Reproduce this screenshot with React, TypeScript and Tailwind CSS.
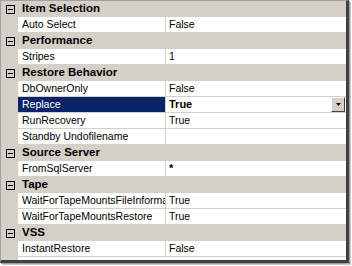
import React from "react";

type Row =
  | { kind: "cat"; label: string }
  | { kind: "prop"; name: string; value: string; selected?: boolean };

const rows: Row[] = [
  { kind: "cat", label: "Item Selection" },
  { kind: "prop", name: "Auto Select", value: "False" },
  { kind: "cat", label: "Performance" },
  { kind: "prop", name: "Stripes", value: "1" },
  { kind: "cat", label: "Restore Behavior" },
  { kind: "prop", name: "DbOwnerOnly", value: "False" },
  { kind: "prop", name: "Replace", value: "True", selected: true },
  { kind: "prop", name: "RunRecovery", value: "True" },
  { kind: "prop", name: "Standby Undofilename", value: "" },
  { kind: "cat", label: "Source Server" },
  { kind: "prop", name: "FromSqlServer", value: "*" },
  { kind: "cat", label: "Tape" },
  { kind: "prop", name: "WaitForTapeMountsFileInformation", value: "True" },
  { kind: "prop", name: "WaitForTapeMountsRestore", value: "True" },
  { kind: "cat", label: "VSS" },
  { kind: "prop", name: "InstantRestore", value: "False" },
];

function MinusBox() {
  return (
    <div className="relative w-[9px] h-[9px] border border-black bg-[#d4d0c8]">
      <div className="absolute left-[1px] top-[3px] w-[5px] h-[1px] bg-black" />
    </div>
  );
}

function DropButton() {
  return (
    <div className="absolute right-[1px] top-0 w-[14px] h-[15px] bg-[#d4d0c8] border-t border-l border-white border-r border-b border-r-[#404040] border-b-[#404040] flex items-center justify-center">
      <svg width="5" height="3" viewBox="0 0 5 3">
        <path d="M0 0h5L2.5 3z" fill="#000" />
      </svg>
    </div>
  );
}

export default function App() {
  return (
    <div className="w-[352px] h-[266px] bg-white font-['Liberation_Sans',Arial,sans-serif] text-[10.5px] text-black">
      <div className="w-[349px] h-[263px] border-t border-l border-[#a0a0a0] border-r-[3px] border-b-[3px] border-r-[#404040] border-b-[#404040] shadow-[1px_1px_0_#a0a0a0,2px_2px_0_#c8c8c8] bg-[#d4d0c8] flex flex-col">
        {rows.map((r, i) =>
          r.kind === "cat" ? (
            <div key={i} className="h-4 flex items-center shrink-0">
              <div className="w-[17px] flex items-center justify-center pl-[1px]">
                <MinusBox />
              </div>
              <span className="pl-[4px] font-bold text-[11.5px] leading-none">{r.label}</span>
            </div>
          ) : (
            <div key={i} className="h-4 flex shrink-0">
              <div className="w-[17px] shrink-0" />
              <div
                className={`w-[148px] shrink-0 border-b border-r border-[#d4d0c8] pl-[4px] flex items-center overflow-hidden whitespace-nowrap ${
                  r.selected ? "bg-[#0a246a] text-white" : "bg-white"
                }`}
              >
                <span className="truncate [text-overflow:clip]">{r.name}</span>
              </div>
              <div
                className={`relative flex-1 bg-white border-b border-[#d4d0c8] pl-[3px] flex items-center whitespace-nowrap ${
                  r.selected || r.value === "*" ? "font-bold text-[11px]" : ""
                }`}
              >
                {r.value}
                {r.selected && <DropButton />}
              </div>
            </div>
          )
        )}
        <div className="flex-1 flex">
          <div className="w-[17px]" />
          <div className="flex-1 bg-white" />
        </div>
      </div>
    </div>
  );
}
